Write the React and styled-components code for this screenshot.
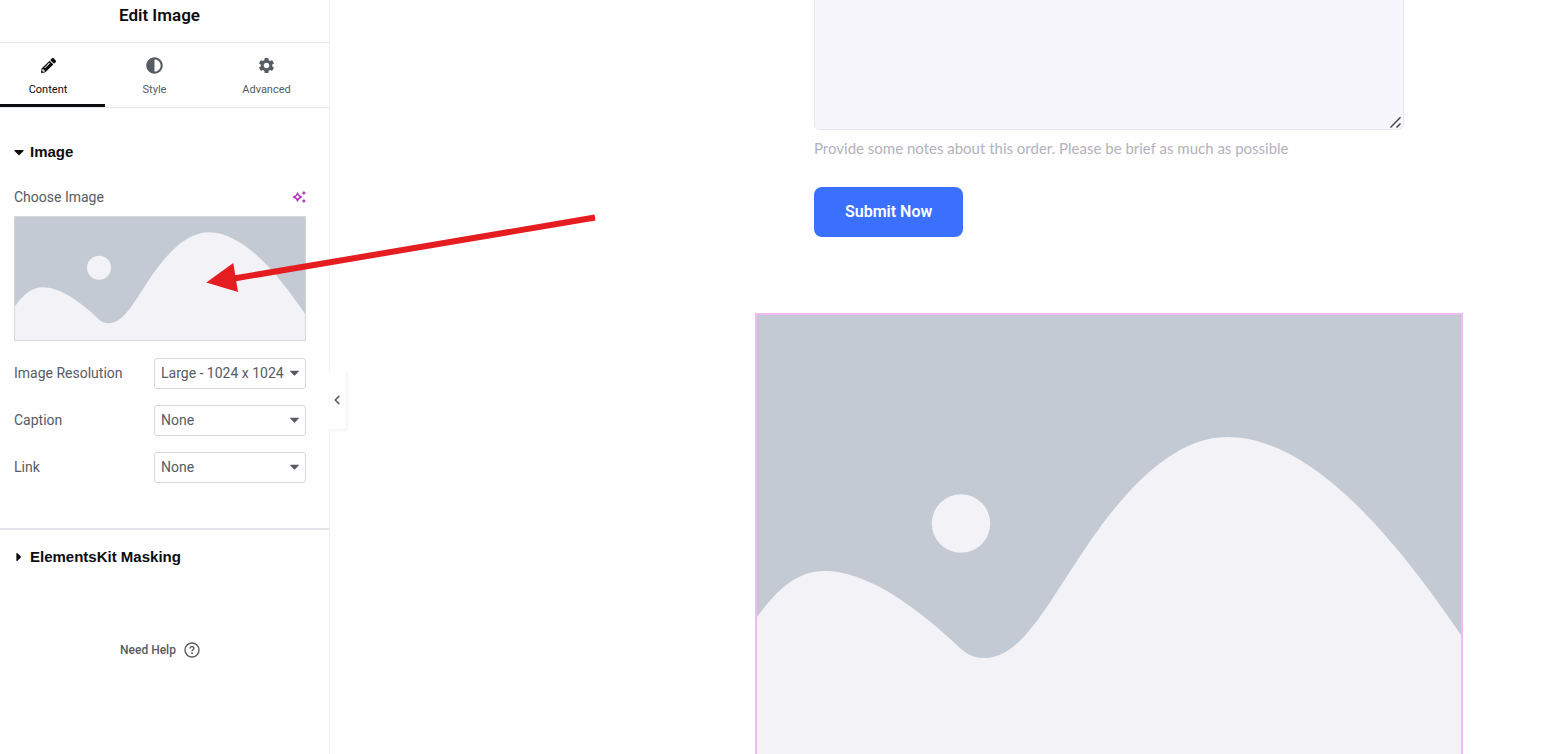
import React, { useState } from "react";
import styled, { createGlobalStyle } from "styled-components";
import { FaPencilAlt, FaAdjust, FaCaretDown, FaCaretRight } from "react-icons/fa";
import { MdSettings } from "react-icons/md";
import { ChevronLeft } from "lucide-react";

const GlobalStyle = createGlobalStyle`
  *, *::before, *::after { box-sizing: border-box; }
  body {
    margin: 0;
    background: #fefefe;
    font-family: Roboto, "Liberation Sans", sans-serif;
    color: #565c64;
  }
  button, select, textarea { font: inherit; color: inherit; }
`;

const Editor = styled.div`
  position: relative;
  display: flex;
  height: 100vh;
  overflow: hidden;
`;

const Panel = styled.aside`
  position: relative;
  flex: 0 0 330px;
  display: flex;
  flex-direction: column;
  background: #fefefe;
  border-right: 1px solid #f3f1f6;
`;

const PanelTitle = styled.h1`
  margin: 0;
  padding-right: 10px;
  height: 43px;
  border-bottom: 1px solid #e6e8ea;
  color: #0c0d0e;
  font-size: 17px;
  font-weight: 600;
  line-height: 30px;
  text-align: center;
`;

const Tabs = styled.nav`
  display: grid;
  grid-template-columns: 105px 99px 1fr;
  height: 65px;
  border-bottom: 1px solid #e6e8ea;
`;

const Tab = styled.button`
  display: flex;
  flex-direction: column;
  align-items: center;
  gap: 9px;
  padding: 14px 0 0;
  border: 0;
  border-bottom: 3px solid ${(p) => (p.$active ? "#0c0d0e" : "transparent")};
  background: none;
  color: ${(p) => (p.$active ? "#0c0d0e" : "#565c64")};
  font-size: 11px;
  line-height: 16px;
  cursor: pointer;

  &:first-child { padding-right: 9px; }
`;

const TabIcon = styled.span`
  display: flex;
  align-items: center;
  justify-content: center;
  height: 16px;
`;

const Section = styled.section`
  padding: 28px 23px 45px 14px;
  border-bottom: 2px solid #e6e4ea;
`;

const SectionToggle = styled.button`
  display: flex;
  align-items: center;
  gap: 6px;
  width: 100%;
  padding: 0;
  border: 0;
  background: none;
  color: #0c0d0e;
  font-family: "Liberation Sans", Arial, sans-serif;
  font-size: 15px;
  font-weight: 700;
  line-height: 32px;
  text-align: left;
  cursor: pointer;

  svg { width: 10px; }
`;

const MaskingSection = styled.section`
  padding: 11px 23px 0 14px;
`;

const FieldHeader = styled.div`
  display: flex;
  align-items: center;
  justify-content: space-between;
  margin-top: 20px;
  height: 18px;
  font-size: 14px;
`;

const AiButton = styled.button`
  display: flex;
  padding: 0;
  border: 0;
  background: none;
  cursor: pointer;
`;

const Thumb = styled.button`
  display: block;
  width: 100%;
  height: 125px;
  margin: 10px 0 17px;
  padding: 0;
  border: 1px solid #d5d8dc;
  background: none;
  cursor: pointer;

  svg { display: block; width: 100%; height: 100%; }
`;

const Fields = styled.div`
  display: grid;
  gap: 16px;
`;

const Field = styled.div`
  display: grid;
  grid-template-columns: 1fr 152px;
  align-items: center;
  font-size: 14px;

  label { padding-bottom: 2px; }
`;

const SelectBox = styled.div`
  display: grid;
  align-items: center;

  > * { grid-area: 1 / 1; }
  svg { justify-self: end; margin: 0 4px 2px 0; pointer-events: none; }
`;

const Select = styled.select`
  appearance: none;
  width: 100%;
  height: 31px;
  padding: 0 20px 2px 6px;
  border: 1px solid #d5d8dc;
  border-radius: 3px;
  background: transparent;
  font-size: 14px;
`;

const HelpLink = styled.a`
  display: flex;
  align-items: center;
  align-self: center;
  gap: 8px;
  margin: 69px 9px 0 0;
  color: #565c64;
  font-size: 12px;
  font-weight: 500;
  line-height: 16px;
  text-decoration: none;
`;

const Collapse = styled.button`
  position: absolute;
  top: 372px;
  left: 329px;
  display: flex;
  align-items: center;
  justify-content: center;
  width: 17px;
  height: 57px;
  padding: 0 2px 2px 0;
  border: 0;
  background: #fefefe;
  box-shadow: 1px 1px 3px #eeecf2;
  clip-path: inset(0 -4px -4px 0);
  cursor: pointer;
`;

const Canvas = styled.main`
  flex: 1;
  min-width: 0;
  padding: 0 79px 0 425px;
`;

const Form = styled.form`
  display: flex;
  flex-direction: column;
  align-items: flex-start;
  padding: 0 59px;
`;

const NotesBox = styled.div`
  position: relative;
  width: 100%;
  margin-top: -20px;
`;

const Notes = styled.textarea`
  display: block;
  width: 100%;
  height: 150px;
  border: 1px solid #e6e6ee;
  border-radius: 6px;
  background: #f7f6fc;
  resize: none;
`;

const Grip = styled.svg`
  position: absolute;
  right: 2px;
  bottom: 2px;
  pointer-events: none;
`;

const Hint = styled.label`
  margin-top: 8px;
  color: #b5b2bc;
  font-family: Lato, Roboto, sans-serif;
  font-size: 15px;
  line-height: 20px;
`;

const Submit = styled.button`
  height: 50px;
  margin-top: 29px;
  padding: 0 31px 2px;
  border: 0;
  border-radius: 8px;
  background: #3b70ff;
  color: #fff;
  font-size: 16px;
  font-weight: 600;
  cursor: pointer;
`;

const ImageWidget = styled.figure`
  margin: 76px 0 0;
  border: 2px solid #f0baf3;

  svg { display: block; width: 100%; }
`;

const Arrow = styled.svg`
  position: absolute;
  top: 210px;
  left: 200px;
  pointer-events: none;
`;

function Placeholder({ fit }) {
  return (
    <svg viewBox="0 0 704 469" preserveAspectRatio={fit} role="img" aria-label="Placeholder">
      <rect width="704" height="469" fill="#c4cad4" />
      <circle cx="204" cy="208.5" r="29.2" fill="#f2f2f7" />
      <path
        fill="#f2f2f7"
        d="M0 302C22 272 42 256 67 256C107 256 152 286 196 326.5C207 337 213 343 228 343C262 343 288 294 316 252C348 202 404 122 470 122C556 122 640 226 704 320V469H0Z"
      />
    </svg>
  );
}

function Sparkles() {
  return (
    <svg width="14" height="14" viewBox="0 0 14 14" fill="none" aria-hidden="true">
      <path d="M5.5 3Q6.1 6.4 9.5 7Q6.1 7.6 5.5 11Q4.9 7.6 1.5 7Q4.9 6.4 5.5 3Z" stroke="#b52fc4" strokeWidth="1.3" strokeLinejoin="round" />
      <path d="M11.9 .7L12.6 2.3L14 3L12.6 3.7L11.9 5.3L11.2 3.7L9.6 3L11.2 2.3ZM11.9 8.7L12.6 10.3L14 11L12.6 11.7L11.9 13.3L11.2 11.7L9.6 11L11.2 10.3Z" fill="#a824b8" />
    </svg>
  );
}

function HelpIcon() {
  return (
    <svg width="16" height="16" viewBox="0 0 16 16" fill="none" stroke="#565c64" aria-hidden="true">
      <circle cx="8" cy="8" r="7" strokeWidth="1.4" />
      <path d="M6.1 6.4C6.1 3.9 9.9 4 9.9 6.3C9.9 7.7 8 7.8 8 9.3" strokeWidth="1.4" />
      <circle cx="8" cy="11.2" r=".9" fill="#565c64" stroke="none" />
    </svg>
  );
}

const TABS = [
  { name: "Content", icon: <FaPencilAlt size={15} /> },
  { name: "Style", icon: <FaAdjust size={17} /> },
  { name: "Advanced", icon: <MdSettings size={19} /> },
];

const FIELDS = [
  { id: "resolution", label: "Image Resolution", options: ["Large - 1024 x 1024", "Full"] },
  { id: "caption", label: "Caption", options: ["None", "Custom Caption"] },
  { id: "link", label: "Link", options: ["None", "Custom URL"] },
];

export default function App() {
  const [tab, setTab] = useState("Content");
  return (
    <>
      <GlobalStyle />
      <Editor>
        <Panel>
          <PanelTitle>Edit Image</PanelTitle>
          <Tabs>
            {TABS.map(({ name, icon }) => (
              <Tab key={name} type="button" $active={tab === name} onClick={() => setTab(name)}>
                <TabIcon>{icon}</TabIcon>
                {name}
              </Tab>
            ))}
          </Tabs>
          <Section>
            <SectionToggle type="button">
              <FaCaretDown size={16} />
              Image
            </SectionToggle>
            <FieldHeader>
              <span>Choose Image</span>
              <AiButton type="button" aria-label="Create with AI">
                <Sparkles />
              </AiButton>
            </FieldHeader>
            <Thumb type="button" aria-label="Choose Image">
              <Placeholder fit="xMidYMid slice" />
            </Thumb>
            <Fields>
              {FIELDS.map(({ id, label, options }) => (
                <Field key={id}>
                  <label htmlFor={id}>{label}</label>
                  <SelectBox>
                    <Select id={id}>
                      {options.map((o) => (
                        <option key={o}>{o}</option>
                      ))}
                    </Select>
                    <FaCaretDown size={15} />
                  </SelectBox>
                </Field>
              ))}
            </Fields>
          </Section>
          <MaskingSection>
            <SectionToggle type="button">
              <FaCaretRight size={14} />
              ElementsKit Masking
            </SectionToggle>
          </MaskingSection>
          <HelpLink href="#help">
            Need Help
            <HelpIcon />
          </HelpLink>
          <Collapse type="button" aria-label="Hide panel">
            <ChevronLeft size={14} strokeWidth={3} />
          </Collapse>
        </Panel>
        <Canvas>
          <Form onSubmit={(e) => e.preventDefault()}>
            <NotesBox>
              <Notes id="notes" />
              <Grip width="12" height="12" viewBox="0 0 12 12" stroke="#44464c" strokeWidth="1.5" aria-hidden="true">
                <path d="M.5 11.5L10.5 1.2M6.5 11.5L10.5 7.5" />
              </Grip>
            </NotesBox>
            <Hint htmlFor="notes">
              Provide some notes about this order. Please be brief as much as possible
            </Hint>
            <Submit type="submit">Submit Now</Submit>
          </Form>
          <ImageWidget>
            <Placeholder fit="xMidYMid meet" />
          </ImageWidget>
        </Canvas>
        <Arrow width="400" height="90" viewBox="200 210 400 90" aria-hidden="true">
          <path d="M234 278.5L595 217.5" stroke="#e51c20" strokeWidth="6" />
          <path d="M206.3 282.5L233.3 263L238 292Z" fill="#e51c20" />
        </Arrow>
      </Editor>
    </>
  );
}
